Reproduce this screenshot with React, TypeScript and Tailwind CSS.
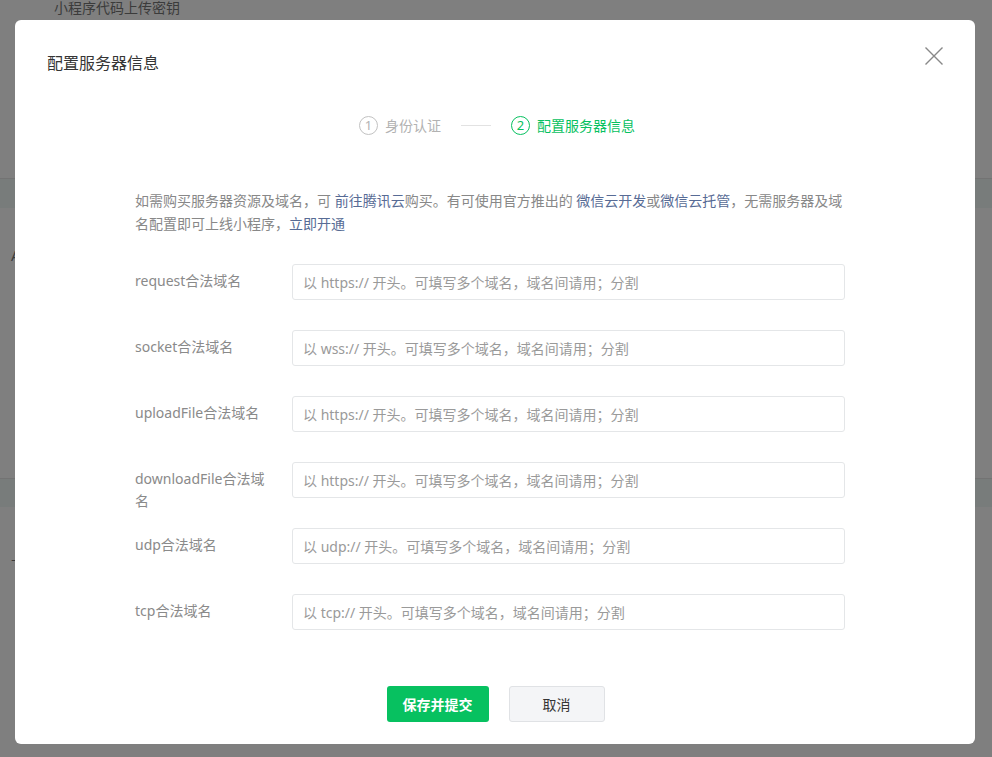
const FONT = '"Noto Sans", "Noto Sans CJK SC", sans-serif';

const FIELDS = [
  { label: "request合法域名", scheme: "https://" },
  { label: "socket合法域名", scheme: "wss://" },
  { label: "uploadFile合法域名", scheme: "https://" },
  { label: "downloadFile合法域名", scheme: "https://" },
  { label: "udp合法域名", scheme: "udp://" },
  { label: "tcp合法域名", scheme: "tcp://" },
];

function Backdrop() {
  return (
    <div className="flex flex-col">
      <div className="h-[16px] pl-[54px] text-[14px] leading-[16px] text-[#3b3b3b]">小程序代码上传密钥</div>
      <div className="h-[162px]" />
      <div className="h-[30px] border-t border-[#737373] bg-[#787c7b]" />
      <div className="relative h-[270px]">
        <span className="absolute left-[11px] top-[38px] text-[14px] leading-[20px] text-[#3b3b3b]">A</span>
      </div>
      <div className="h-[29px] border-t border-[#737373] bg-[#787c7b]" />
      <div className="relative h-[250px]">
        <span className="absolute left-[11px] top-[38px] text-[14px] leading-[20px] text-[#3b3b3b]">上</span>
      </div>
    </div>
  );
}

function StepCircle({ n, active }: { n: number; active: boolean }) {
  return (
    <span
      className={[
        "flex h-[19px] w-[19px] items-center justify-center rounded-full border text-[13px] leading-none",
        active ? "border-[#07c160] text-[#07c160]" : "border-[#c2c2c2] text-[#b2b2b2]",
      ].join(" ")}
    >
      {n}
    </span>
  );
}

function Steps() {
  return (
    <div className="mt-[41px] flex h-[20px] items-center justify-center pl-[4px] text-[14px]">
      <StepCircle n={1} active={false} />
      <span className="ml-[7px] text-[#b2b2b2]">身份认证</span>
      <span className="mx-[20px] h-px w-[30px] bg-[#e2e2e2]" />
      <StepCircle n={2} active />
      <span className="ml-[7px] text-[#07c160]">配置服务器信息</span>
    </div>
  );
}

function FieldRow({ label, scheme }: { label: string; scheme: string }) {
  return (
    <div className="mb-[30px] flex h-[36px] items-start">
      <label className="w-[157px] shrink-0 pr-[14px] pt-[6px] text-[14px] leading-[22px] text-[#8a8a8a] break-all">
        {label}
      </label>
      <input
        type="text"
        placeholder={`以 ${scheme} 开头。可填写多个域名，域名间请用；分割`}
        className="h-[36px] w-[553px] rounded-[3px] border border-[#e4e6e8] px-[10px] text-[14px] text-[#353535] outline-none placeholder:text-[#9a9a9a]"
      />
    </div>
  );
}

export default function App() {
  return (
    <div className="relative h-[757px] w-full overflow-hidden bg-[#7f7f7f]" style={{ fontFamily: FONT }}>
      <Backdrop />

      <div className="absolute left-[15px] top-[20px] flex h-[724px] w-[960px] flex-col rounded-[6px] bg-white">
        <button type="button" aria-label="关闭" className="absolute right-[32px] top-[27px]">
          <svg width="18" height="18" viewBox="0 0 18 18" fill="none" stroke="#888" strokeWidth="1.4">
            <path d="M0.5 0.5 17.5 17.5M17.5 0.5 0.5 17.5" />
          </svg>
        </button>

        <h2 className="pl-[32px] pt-[32px] text-[16px] leading-[22px] text-[#353535]">配置服务器信息</h2>

        <Steps />

        <div className="ml-[120px] mt-[54px] w-[714px]">
          <p className="text-[14px] leading-[23px] text-[#888]">
            如需购买服务器资源及域名，可 <span className="text-[#576b95]">前往腾讯云</span>购买。有可使用官方推出的{" "}
            <span className="text-[#576b95]">微信云开发</span>或<span className="text-[#576b95]">微信云托管</span>
            ，无需服务器及域名配置即可上线小程序，<span className="text-[#576b95]">立即开通</span>
          </p>

          <div className="mt-[29px] flex flex-col">
            {FIELDS.map((f) => (
              <FieldRow key={f.label} label={f.label} scheme={f.scheme} />
            ))}
          </div>
        </div>

        <div className="mt-[26px] flex justify-center gap-[20px] pl-[1px]">
          <button
            type="button"
            className="h-[36px] w-[102px] rounded-[3px] bg-[#07c160] text-[14px] font-bold text-white"
          >
            保存并提交
          </button>
          <button
            type="button"
            className="h-[36px] w-[96px] rounded-[3px] border border-[#e0e2e5] bg-[#f4f5f7] text-[14px] text-[#353535]"
          >
            取消
          </button>
        </div>
      </div>
    </div>
  );
}
